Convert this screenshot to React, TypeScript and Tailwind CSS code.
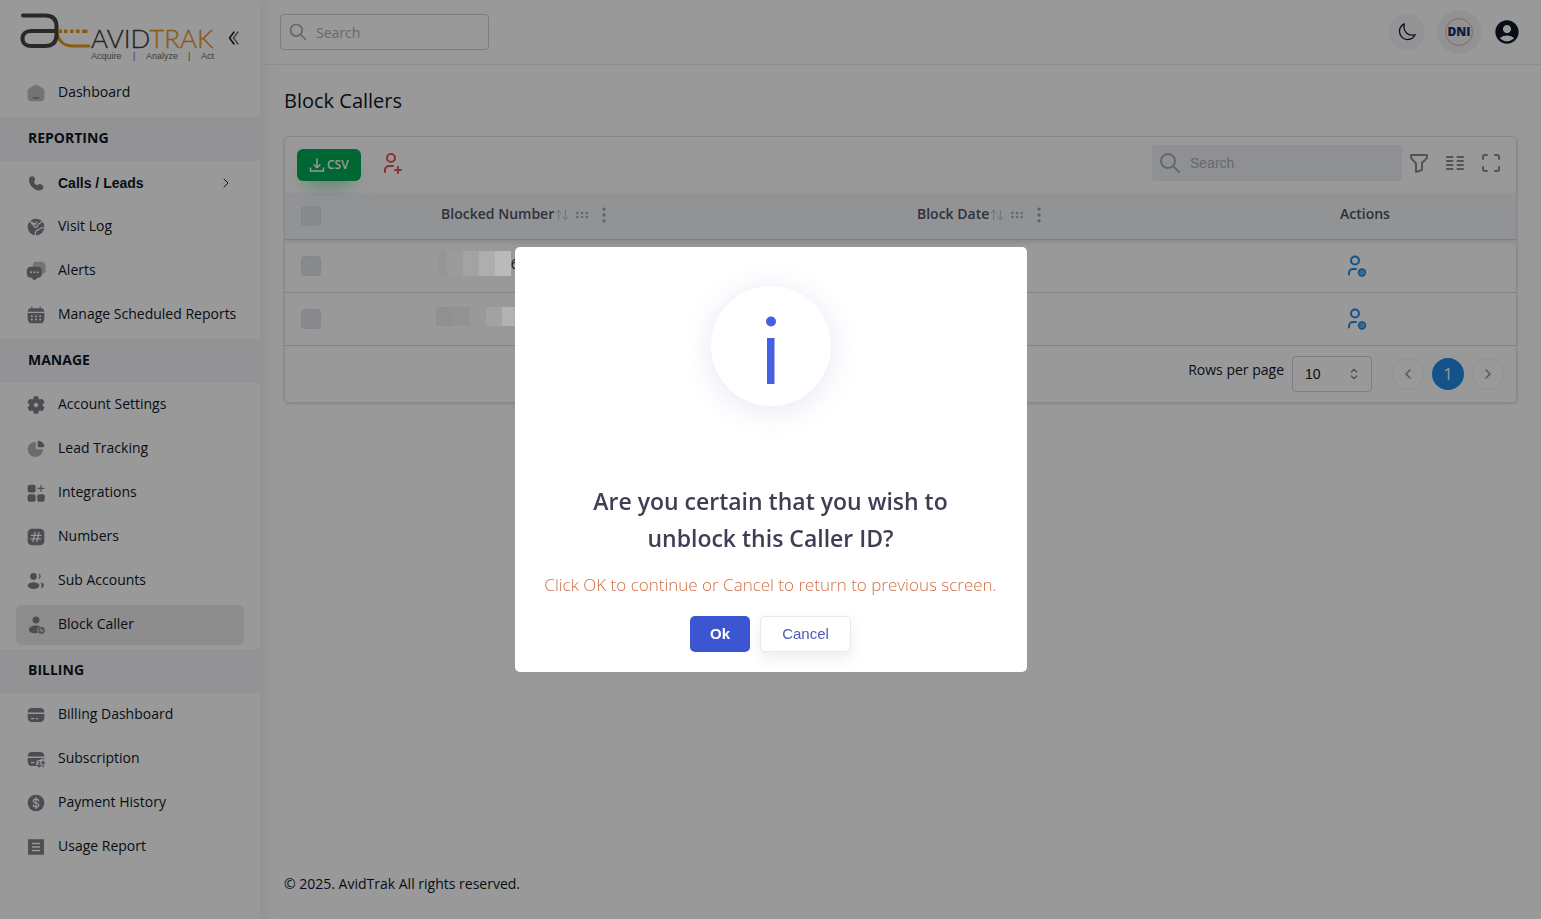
import React from "react";
import {
  TbArrowsSort,
  TbChevronLeft,
  TbChevronRight,
  TbColumns,
  TbDotsVertical,
  TbFilter,
  TbGripHorizontal,
  TbMaximize,
  TbSearch,
  TbSelector,
  TbUserPlus,
} from "react-icons/tb";
import { HiOutlineMoon } from "react-icons/hi2";
import { MdAccountCircle } from "react-icons/md";

type IconName =
  | "home"
  | "phone"
  | "globe"
  | "chat"
  | "calendar"
  | "gear"
  | "pie"
  | "widgets"
  | "hash"
  | "users"
  | "userBlock"
  | "card"
  | "cardTransfer"
  | "dollar"
  | "receipt";

const glyphs: Record<IconName, React.ReactNode> = {
  home: (
    <>
      <path
        opacity=".5"
        d="M2 12.2c0-2.3 0-3.4.5-4.4.5-.9 1.5-1.5 3.4-2.7l2-1.2C9.9 2.6 10.900 2 12 2s2.100.6 4.100 1.900l2 1.200c1.900 1.200 2.900 1.800 3.400 2.700.5 1 .5 2.100.5 4.400v1.500c0 3.900 0 5.900-1.200 7.100S17.800 22 14 22h-4c-3.800 0-5.700 0-6.800-1.200S2 17.600 2 13.700z"
      />
      <rect x="8" y="17.200" width="8" height="1.600" rx=".8" />
    </>
  ),
  phone: (
    <path d="M10 5.300l.7 1.200c.6 1 .4 2.400-.6 3.400 0 0-1.200 1.200 1 3.300 2.100 2.200 3.300 1 3.300 1 1-1 2.300-1.200 3.400-.6l1.800 1c1.600.9 1.800 3.200.3 4.700-.9.900-2 1.600-3.200 1.700-2 .1-5.500-.4-9-3.900S3.400 10 3.500 8c0-1.200.7-2.300 1.600-3.200C6.600 3.300 8.900 3.700 10 5.300z" />
  ),
  globe: (
    <>
      <circle cx="12" cy="12" r="10" />
      <path
        d="M5 4.500c1 3 2.500 3.500 4 5.500s1 3 3 2.500 1.500-3 3-4 3-1 4-3.500M21 13c-2-.5-4 .5-5 1.500s-3 1-4 2.500-1 3-1 4.500M8 6.500l3 2.500 2-3"
        fill="none"
        stroke="#fff"
        strokeWidth="1.500"
        strokeLinecap="round"
      />
    </>
  ),
  chat: (
    <>
      <path opacity=".5" d="M12 1h6c3.500 0 5.500 1.800 5.500 5v5c0 3-1.800 5-4.500 5l-2-7-9-2c0-4 1-6 4-6z" />
      <path d="M6 7h8c3.300 0 5 1.600 5 5v3c0 3.400-1.500 5-4.800 5.100L10 23.500 6.500 20C2.600 20 1 18.600 1 15v-3c0-3.400 1.700-5 5-5z" />
      <g fill="#fff">
        <circle cx="6" cy="13.500" r="1.200" />
        <circle cx="10" cy="13.500" r="1.200" />
        <circle cx="14" cy="13.500" r="1.200" />
      </g>
    </>
  ),
  calendar: (
    <>
      <path d="M7 1.800c.5 0 .8.4.8.8V4h8.400V2.600a.8.8 0 011.600 0V4c2.700.2 4 1.500 4.200 4H2c.2-2.500 1.500-3.800 4.200-4V2.600c0-.4.4-.8.8-.8z" />
      <path d="M2 9.500h20V15c0 5.500-1.500 7-6 7H8c-4.500 0-6-1.500-6-7z" />
      <g fill="#fff">
        <circle cx="7" cy="13.500" r="1.200" />
        <circle cx="12" cy="13.500" r="1.200" />
        <circle cx="17" cy="13.500" r="1.200" />
        <circle cx="7" cy="17.500" r="1.200" />
        <circle cx="12" cy="17.500" r="1.200" />
        <circle cx="17" cy="17.500" r="1.200" />
      </g>
    </>
  ),
  gear: (
    <path
      fillRule="evenodd"
      d="M9.800 2h4.400l.8 3 1.600.9 3-.8 2.200 3.800-2.200 2.200v1.800l2.200 2.200-2.200 3.800-3-.8-1.600.9-.8 3H9.800L9 19l-1.600-.9-3 .8-2.200-3.800 2.200-2.200v-1.800L2.200 8.900l2.200-3.800 3 .8L9 5zM12 9a3 3 0 100 6 3 3 0 000-6z"
      stroke="currentColor"
      strokeWidth="1"
      strokeLinejoin="round"
    />
  ),
  pie: (
    <>
      <path opacity=".6" d="M10.500 3.500C5.600 4 2 7.900 2 12.700a9.300 9.300 0 0018.500.8c.1-.8-.5-1.300-1.300-1.300h-5.700c-1.300 0-1.800-.5-1.800-1.800V4.700c0-.8-.5-1.200-1.200-1.200z" />
      <path d="M14 3.500c0-1 .8-1.700 1.800-1.500A8.500 8.500 0 0122 8.200c.2 1-.5 1.800-1.500 1.800h-5c-1 0-1.500-.5-1.500-1.500z" />
    </>
  ),
  widgets: (
    <>
      <rect x="2" y="2" width="9.500" height="9.500" rx="2.500" />
      <rect x="2" y="13.500" width="9.500" height="9" rx="2.500" />
      <rect x="13.500" y="13.500" width="9" height="9" rx="2.500" />
      <path d="M18 3v7M14.500 6.500h7" stroke="currentColor" strokeWidth="1.500" strokeLinecap="round" />
    </>
  ),
  hash: (
    <>
      <rect x="2" y="2" width="20" height="20" rx="5" />
      <path
        d="M11 6.500L8.500 17.500M15.500 6.500L13 17.500M6.500 10h11.500M6 14.200h11.500"
        stroke="#fff"
        strokeWidth="1.500"
        strokeLinecap="round"
      />
    </>
  ),
  users: (
    <>
      <circle cx="9" cy="6.500" r="4" />
      <ellipse cx="9" cy="17.500" rx="7" ry="4" />
      <path d="M15 2.800a3.800 3.800 0 010 7.200c1.300-2 1.300-5.200 0-7.200zM17.500 13.500c2.500.4 4 1.800 4 3.700s-1.500 3.300-4 3.600c1.500-2 1.500-5.300 0-7.300z" />
    </>
  ),
  userBlock: (
    <>
      <circle cx="12" cy="6" r="4.200" />
      <path d="M12 12.500c2 0 4 .4 5.500 1.200a5 5 0 00-3.200 7.900c-5 .8-10.800-.2-10.800-4 0-3 3.800-5.100 8.500-5.100z" />
      <path
        fillRule="evenodd"
        d="M18.500 14.500a4 4 0 110 8 4 4 0 010-8zm-2 5.300l3.300-3.300a2.400 2.400 0 00-3.300 3.300zm4-2.500l-3.200 3.200a2.400 2.400 0 003.200-3.200z"
      />
    </>
  ),
  card: (
    <>
      <path d="M8 3.500h8c4 0 5.800 1.200 6 5.500H2c.2-4.300 2-5.500 6-5.500z" />
      <path
        fillRule="evenodd"
        d="M2 10.800h20V13c0 5.800-1.500 7.500-6 7.500H8c-4.500 0-6-1.700-6-7.500zm4 4.700V17h4v-1.500zm6 0V17h2.500v-1.500z"
      />
    </>
  ),
  cardTransfer: (
    <>
      <path d="M8 3.500h8c4 0 5.800 1.200 6 5.500H2c.2-4.300 2-5.500 6-5.500z" />
      <path d="M2 10.800h20v1.700c-3-1-4.500-.5-5.500.7-2.500-.4-4 .6-4 3.300v4H8c-4.500 0-6-1.700-6-7.500zm4 4.700V17h4v-1.500z" fillRule="evenodd" />
      <path
        d="M15.800 15v6.500M13.800 19.500l2 2 2-2M20.500 21.500V15M18.500 17l2-2 2 2"
        fill="none"
        stroke="currentColor"
        strokeWidth="1.500"
        strokeLinecap="round"
      />
    </>
  ),
  dollar: (
    <>
      <circle cx="12" cy="12" r="10" />
      <path
        d="M15.200 9.500C15 8 13.800 7.300 12 7.300c-2 0-3.200.9-3.200 2.300 0 3.300 6.600 1.500 6.600 4.900 0 1.400-1.400 2.300-3.400 2.300S8.700 16 8.600 14.500M12 5.300v13.400"
        fill="none"
        stroke="#fff"
        strokeWidth="1.500"
        strokeLinecap="round"
      />
    </>
  ),
  receipt: (
    <path
      fillRule="evenodd"
      d="M2.500 2l1.600 1.300L5.700 2l1.600 1.300L8.900 2l1.500 1.300L12 2l1.600 1.300L15.100 2l1.600 1.300L18.300 2l1.600 1.300L21.500 2v20l-1.600-1.300-1.600 1.300-1.600-1.300-1.600 1.300-1.500-1.300L12 22l-1.600-1.300L8.900 22l-1.600-1.300L5.700 22l-1.600-1.300L2.500 22zM7 7v1.600h10V7zm0 4.200v1.600h10v-1.600zm0 4.200V17h10v-1.600z"
    />
  ),
};

function NavIcon({ name }: { name: IconName }) {
  return (
    <svg viewBox="0 0 24 24" className="size-5 shrink-0 text-[#7d8189]" fill="currentColor" aria-hidden="true">
      {glyphs[name]}
    </svg>
  );
}

type Item = { label: string; icon: IconName; active?: boolean; expandable?: boolean };

const sections: { title?: string; items: Item[] }[] = [
  { items: [{ label: "Dashboard", icon: "home" }] },
  {
    title: "REPORTING",
    items: [
      { label: "Calls / Leads", icon: "phone", expandable: true },
      { label: "Visit Log", icon: "globe" },
      { label: "Alerts", icon: "chat" },
      { label: "Manage Scheduled Reports", icon: "calendar" },
    ],
  },
  {
    title: "MANAGE",
    items: [
      { label: "Account Settings", icon: "gear" },
      { label: "Lead Tracking", icon: "pie" },
      { label: "Integrations", icon: "widgets" },
      { label: "Numbers", icon: "hash" },
      { label: "Sub Accounts", icon: "users" },
      { label: "Block Caller", icon: "userBlock", active: true },
    ],
  },
  {
    title: "BILLING",
    items: [
      { label: "Billing Dashboard", icon: "card" },
      { label: "Subscription", icon: "cardTransfer" },
      { label: "Payment History", icon: "dollar" },
      { label: "Usage Report", icon: "receipt" },
    ],
  },
];

function Logo() {
  return (
    <svg viewBox="0 0 198 50" className="h-[50px] w-[198px]" role="img" aria-label="AvidTrak">
      <g fill="none" strokeLinecap="round">
        <path d="M37 21c1 9 7 14 16 14h16" stroke="#e8971f" strokeWidth="3" />
        <path
          d="M3 4.500h22c8 0 11.500 4 11.500 11v8c0 7.500-4 11.500-11.500 11.500H11c-5 0-8.500-3-8.500-7.500s3.500-7.500 8.500-7.500h25"
          stroke="#454545"
          strokeWidth="4"
        />
      </g>
      <g fill="#e8971f">
        <rect x="38" y="18.500" width="4" height="3.500" />
        <rect x="44" y="18.500" width="3.500" height="3.500" />
        <rect x="50" y="18.500" width="3.500" height="3.500" />
        <rect x="56" y="18.500" width="3.500" height="3.500" />
        <rect x="62" y="18.500" width="5.500" height="3.500" />
      </g>
      <text x="71" y="37" fontFamily="Lato, sans-serif" fontSize="26" fontWeight="300" fill="#3c3c3c" stroke="#3c3c3c" strokeWidth=".3">
        AVID
        <tspan fill="#e8971f" stroke="#e8971f">
          TRAK
        </tspan>
      </text>
      <g fontFamily="'Liberation Sans', sans-serif" fontSize="9" fill="#666">
        <text x="71" y="48">Acquire</text>
        <text x="113" y="48">|</text>
        <text x="126" y="48">Analyze</text>
        <text x="168" y="48">|</text>
        <text x="181" y="48">Act</text>
      </g>
    </svg>
  );
}

function Sidebar() {
  return (
    <aside className="w-[260px] shrink-0 bg-white shadow-[4px_0_14px_0_rgba(94,92,154,0.1)]">
      <div className="flex h-[71px] items-center justify-between pr-5 pl-5">
        <Logo />
        <button type="button" aria-label="Collapse sidebar" className="mt-1 flex">
          <svg viewBox="0 0 12 16" className="h-4 w-3" fill="none" stroke="currentColor" strokeLinecap="round" strokeLinejoin="round" aria-hidden="true">
            <path d="M6 2L1.500 8 6 14" strokeWidth="1.500" />
            <path d="M10 2L5.500 8l4.500 6" strokeWidth="1.500" opacity=".6" />
          </svg>
        </button>
      </div>
      <nav>
        {sections.map((section) => (
          <div key={section.items[0].label}>
            {section.title && (
              <h2 className="flex h-11 items-center bg-[#f5f5fb] px-7 pb-0.5 text-sm font-bold">{section.title}</h2>
            )}
            <ul className="flex flex-col gap-1 px-4 pt-0.5 pb-1">
              {section.items.map((item) => (
                <li key={item.label}>
                  <a
                    href="#"
                    className={
                      item.active
                        ? "flex h-10 items-center gap-3 rounded-md bg-[#ebebeb] px-2.5"
                        : "flex h-10 items-center gap-3 rounded-md px-2.5"
                    }
                  >
                    <NavIcon name={item.icon} />
                    <span
                      className={
                        item.expandable
                          ? "font-['Liberation_Sans',sans-serif] text-sm font-bold whitespace-nowrap"
                          : "pb-0.5 text-sm font-medium whitespace-nowrap"
                      }
                    >
                      {item.label}
                    </span>
                    {item.expandable && <TbChevronRight className="ml-auto size-4" strokeWidth={1.5} />}
                  </a>
                </li>
              ))}
            </ul>
          </div>
        ))}
      </nav>
    </aside>
  );
}

function Header() {
  return (
    <header className="flex h-[65px] items-center justify-between border-b border-[#ececf2] pr-5 pl-5">
      <div className="flex h-9 w-[209px] items-center gap-2 rounded border border-[#cfd1dc] px-[7px]">
        <TbSearch className="size-5 shrink-0 text-[#a3a8b6]" />
        <input
          type="search"
          aria-label="Search site"
          placeholder="Search"
          className="h-full w-full min-w-0 bg-transparent text-sm outline-none placeholder:text-[#a8adba]"
        />
      </div>
      <div className="flex items-center gap-3">
        <button type="button" aria-label="Dark mode" className="flex size-9 items-center justify-center rounded-full bg-[#f6f6fb]">
          <HiOutlineMoon className="size-5" />
        </button>
        <button type="button" aria-label="DNI account" className="flex size-11 items-center justify-center rounded-full bg-[#f3f3f7]">
          <span className="flex size-7 items-center justify-center rounded-full border border-[#e5b092] text-xs font-extrabold text-[#17315f]">
            DNI
          </span>
        </button>
        <button type="button" aria-label="Profile" className="flex">
          <MdAccountCircle className="size-7" />
        </button>
      </div>
    </header>
  );
}

function UserCancelIcon() {
  return (
    <svg viewBox="0 0 24 24" className="size-6" fill="none" stroke="currentColor" strokeWidth="2" strokeLinecap="round" aria-hidden="true">
      <circle cx="11" cy="6.500" r="4" />
      <path d="M5 20.500v-1.500a4 4 0 0 1 4-4h3" />
      <circle cx="18" cy="18.500" r="4.200" fill="currentColor" stroke="none" />
      <circle cx="18" cy="18.500" r="2" stroke="#9cc9f2" strokeWidth=".9" />
      <path d="M16.700 19.800l2.600-2.600" stroke="#9cc9f2" strokeWidth=".9" />
    </svg>
  );
}

function ColumnTitle({ title }: { title: string }) {
  return (
    <div className="flex items-center justify-center pl-2">
      <span>{title}</span>
      <TbArrowsSort className="mt-0.5 size-4 text-[#b9bcc1]" strokeWidth={1.5} />
      <TbGripHorizontal className="mt-0.5 ml-1 size-4 text-[#a9acb1]" />
      <TbDotsVertical className="mt-0.5 ml-1 size-5 text-[#a0a3a8]" />
    </div>
  );
}

function Tick({ label }: { label: string }) {
  return (
    <input
      type="checkbox"
      aria-label={label}
      className="block size-5 appearance-none rounded border border-[#dbdfe6] bg-[#e3e6eb]"
    />
  );
}

function Mosaic({ row }: { row: number }) {
  return row === 0 ? (
    <span className="relative z-40 flex h-[25px]" aria-hidden="true">
      <span className="w-2 bg-[#959595]" />
      <span className="w-4 bg-[#9b9b9b]" />
      <span className="w-4 bg-[#a3a3a3]" />
      <span className="w-4 bg-[#aeaeae]" />
      <span className="w-4 bg-[#bababa]" />
    </span>
  ) : (
    <span className="relative z-40 flex h-[19px]" aria-hidden="true">
      <span className="w-4 bg-[#91908f]" />
      <span className="w-[18px] bg-[#929292]" />
      <span className="w-4 bg-[#999999]" />
      <span className="w-4 bg-[#a2a2a2]" />
      <span className="w-5 bg-[#b2b2b2]" />
    </span>
  );
}

function CallersTable() {
  return (
    <section className="overflow-hidden rounded border border-[#e0e2e7] shadow-[0_1px_3px_rgba(0,0,0,0.12)]">
      <div className="flex h-14 items-center px-3">
        <button
          type="button"
          className="flex h-8 items-center gap-0.5 rounded-md bg-[#00ab55] px-3 text-xs font-semibold text-white shadow-[0_10px_20px_-10px_rgba(0,171,85,0.7)]"
        >
          <svg viewBox="0 0 16 16" className="size-4" fill="none" stroke="currentColor" strokeWidth="1.500" strokeLinecap="round" strokeLinejoin="round" aria-hidden="true">
            <path d="M8 2v8.500M5 7.800l3 3 3-3M1.500 11v3h13v-3" />
          </svg>
          CSV
        </button>
        <button type="button" aria-label="Block a caller" className="ml-[18px] pb-1 text-[#e7515a]">
          <TbUserPlus className="size-6" />
        </button>
        <div className="ml-auto flex items-center gap-3 pr-px pb-1">
          <div className="-mr-[7px] flex h-9 w-[250px] items-center gap-2 rounded bg-[#edf1f5] px-1.5">
            <TbSearch className="size-6 shrink-0 text-[#a8adb5]" />
            <input
              type="search"
              aria-label="Search callers"
              placeholder="Search"
              className="h-full w-full min-w-0 bg-transparent font-['Liberation_Sans',sans-serif] text-sm outline-none placeholder:text-[#abb0b8]"
            />
          </div>
          <button type="button" aria-label="Show filters" className="text-[#868e96]">
            <TbFilter className="size-6" />
          </button>
          <button type="button" aria-label="Show columns" className="text-[#868e96]">
            <TbColumns className="size-6" />
          </button>
          <button type="button" aria-label="Full screen" className="text-[#868e96]">
            <TbMaximize className="size-6" />
          </button>
        </div>
      </div>
      <table className="w-full table-fixed text-sm">
        <thead>
          <tr className="h-[46px] border-b border-[#cfd1d4] bg-[#f2f5f9] text-[#515365] shadow-[0_3px_5px_rgba(0,0,0,0.12)]">
            <th className="w-[54px] pl-4">
              <Tick label="Select all" />
            </th>
            <th className="w-[30%] pb-1 font-semibold">
              <ColumnTitle title="Blocked Number" />
            </th>
            <th className="w-[44%] pb-1 font-semibold">
              <ColumnTitle title="Block Date" />
            </th>
            <th className="pr-9 pb-1 font-semibold">Actions</th>
          </tr>
        </thead>
        <tbody>
          {[0, 1].map((row) => (
            <tr key={row} className="h-[53px] border-b border-[#d5d7da]">
              <td className="pl-4">
                <Tick label={`Select row ${row + 1}`} />
              </td>
              <td>
                <div className="flex items-center justify-center pr-[90px] pb-1">
                  <Mosaic row={row} />
                  {row === 0 && <span>6</span>}
                </div>
              </td>
              <td />
              <td className="pr-[54px] text-center">
                <button type="button" aria-label="Unblock caller" className="align-middle text-[#228be6]">
                  <UserCancelIcon />
                </button>
              </td>
            </tr>
          ))}
        </tbody>
      </table>
      <div className="flex h-14 items-center justify-end px-3">
        <label htmlFor="rows" className="pr-2 pb-2 text-sm">
          Rows per page
        </label>
        <div className="relative mr-5">
          <select
            id="rows"
            defaultValue="10"
            className="h-9 w-20 appearance-none rounded border border-[#ced4da] pl-3 font-['Liberation_Sans',sans-serif] text-sm"
          >
            <option>10</option>
            <option>20</option>
          </select>
          <TbSelector className="pointer-events-none absolute top-2.5 right-2.5 size-4 text-[#868e96]" />
        </div>
        <div className="flex gap-2">
          <button type="button" aria-label="Previous page" className="flex size-8 items-center justify-center rounded-full border border-[#eff0f3] text-[#868e96]">
            <TbChevronLeft className="size-4" />
          </button>
          <button type="button" className="size-8 rounded-full bg-[#228be6] text-base text-white">
            1
          </button>
          <button type="button" aria-label="Next page" className="flex size-8 items-center justify-center rounded-full border border-[#eff0f3] text-[#868e96]">
            <TbChevronRight className="size-4" />
          </button>
        </div>
      </div>
    </section>
  );
}

function ConfirmDialog() {
  return (
    <>
      <div className="fixed inset-0 z-30 bg-black/40" />
      <div className="fixed inset-0 z-50 flex items-center justify-center">
        <div
          role="dialog"
          aria-modal="true"
          aria-labelledby="confirm-title"
          className="flex w-full max-w-lg flex-col items-center rounded-[5px] bg-white px-4 pt-[39px] pb-5 font-['Open_Sans',sans-serif]"
        >
          <div className="flex size-[120px] items-center justify-center rounded-full bg-white shadow-[0_4px_30px_rgba(73,62,170,0.13)]">
            <svg viewBox="0 0 120 120" className="size-[120px]" fill="#4560e2" aria-hidden="true">
              <circle cx="60" cy="35.500" r="5" />
              <rect x="56" y="52" width="7.500" height="46" />
            </svg>
          </div>
          <h2 id="confirm-title" className="mt-[77px] text-center text-[23px] leading-[37px] font-semibold text-[#3e3e55]">
            Are you certain that you wish to
            <br />
            unblock this Caller ID?
          </h2>
          <p className="mt-3.5 text-center text-[17px] leading-[27px] font-light whitespace-nowrap text-[#cf7046]">
            Click OK to continue or Cancel to return to previous screen.
          </p>
          <div className="mt-[18px] flex gap-2.5 font-['Liberation_Sans',sans-serif] text-[15px]">
            <button type="button" className="h-9 w-[60px] rounded-[5px] bg-[#3b55d3] font-bold text-white">
              Ok
            </button>
            <button
              type="button"
              className="h-9 w-[91px] rounded-[5px] border border-[#e8e8ee] bg-white text-[#4a5cb5] shadow-[0_6px_16px_rgba(0,0,0,0.08)]"
            >
              Cancel
            </button>
          </div>
        </div>
      </div>
    </>
  );
}

export default function App() {
  return (
    <div className="flex min-h-screen bg-white font-['Open_Sans',sans-serif] text-[#0e1726]">
      <Sidebar />
      <div className="flex min-w-0 flex-1 flex-col">
        <Header />
        <main className="px-6 pt-[22px]">
          <h1 className="mb-[21px] text-xl">Block Callers</h1>
          <CallersTable />
        </main>
        <footer className="mt-auto px-6 py-6 text-sm leading-[22px]">© 2025. AvidTrak All rights reserved.</footer>
      </div>
      <ConfirmDialog />
    </div>
  );
}
